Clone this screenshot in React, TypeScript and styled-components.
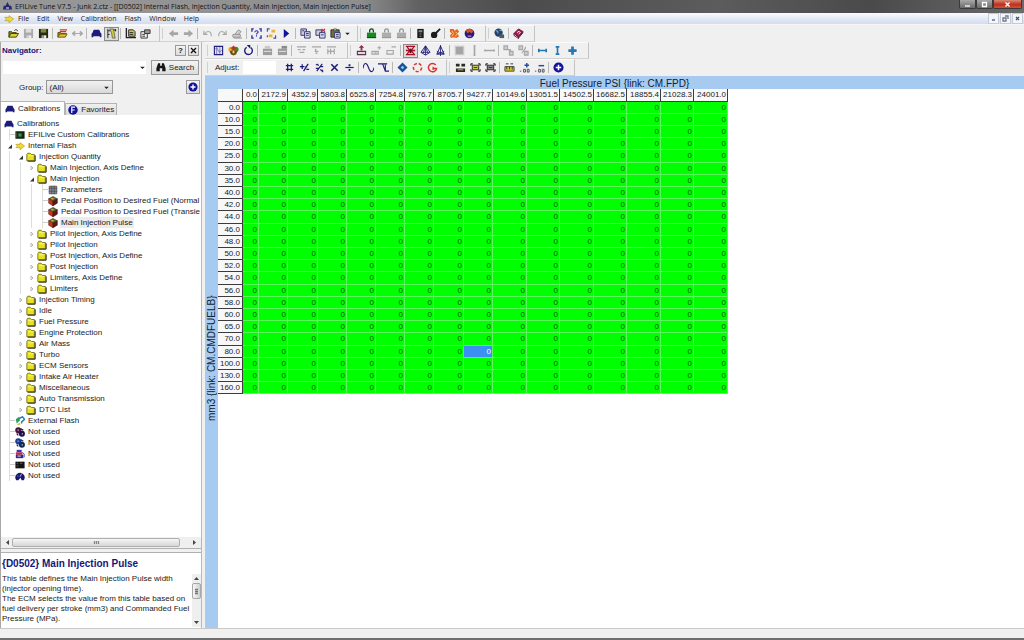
import React from "react";
import styled, { createGlobalStyle, css } from "styled-components";

const GlobalStyle = createGlobalStyle`
  *, *::before, *::after { box-sizing: border-box; }
  html, body { margin: 0; }
  body {
    font-family: "Liberation Sans", Arial, sans-serif;
    font-size: 8px;
    line-height: 11px;
    color: #222;
    background: #f0f0f0;
  }
  button, input, select { font: inherit; color: inherit; margin: 0; padding: 0; border: 0; background: none; border-radius: 0; }
  ul { margin: 0; padding: 0; list-style: none; }
  svg { display: block; flex: none; }
`;

/* ---------- icons ---------- */

const NAVY = "#1c1c7c";
const GREY = "#a6a6a6";

const floppy = (c: string, label: string) => (
  <>
    <path d="M1 1h10v10H1z" fill={c} />
    <path d="M3 1h6v4H3z" fill={label} />
    <path d="M4 8h5v3H4z" fill="#eee" />
    <path d="M5 8h1v3H5z" fill={c} />
  </>
);
const padlock = (c: string, d: string) => (
  <>
    <path d="M4 5V3a2 2 0 0 1 4 0v2" fill="none" stroke={d} strokeWidth="1.4" />
    <path d="M1 5h10v6H1z" fill={c} />
    <path d="M1 10h10v1H1z" fill={d} />
  </>
);
const car = (
  <path d="M3 2h6l1.4 3.2 1 1V10H9.500V9H2.500v1H.6V6.200l1-1z" fill={NAVY} />
);
const gearPair = (a: string, b: string) => (
  <>
    <circle cx="4" cy="4" r="3.700" fill={a} />
    <circle cx="8.300" cy="8" r="3.600" fill={b} />
    <path d="M3 3h1.500v1.500H3zM8 7.500h1.500V9H8z" fill="#b8b8d8" />
    <path d="M7 2l3 2M2 8l2 2" stroke={b} strokeWidth="1.500" />
  </>
);
const cone = (
  <>
    <path d="M6 1L1 8l5 3 5-3z" fill="none" stroke={NAVY} strokeWidth="1" />
    <path d="M6 1v10M6 1L3.500 9M6 1l2.500 8M2 8h8" stroke={NAVY} strokeWidth=".9" fill="none" />
  </>
);
const chip = (fill: string) => (
  <>
    <path d="M1 2h2M9 2h2M1 10h2M9 10h2M1 2v2M11 2v2M1 8v2M11 8v2" stroke="#222" strokeWidth="1.200" fill="none" />
    <path d="M2.500 3.500h7v5h-7z" fill={fill} stroke="#222" />
    <path d="M4 6h4" stroke="#333" />
  </>
);

const ICONS: Record<string, React.ReactNode> = {
  open: (
    <>
      <path d="M1 10V4h3l1 1h4v1" fill="#8a8420" stroke="#3e3c10" />
      <path d="M1 10l2-4h8.500L9 10z" fill="#d7d02e" stroke="#3e3c10" />
      <path d="M7 3c1-2 3-1.500 3.500.500" fill="none" stroke="#333" />
    </>
  ),
  saveGrey: floppy("#aaa", "#ddd"),
  save: floppy("#242a14", "#7e8c30"),
  openRed: (
    <>
      <path d="M1 10V5h3l1 1h5v1" fill="#a09018" stroke="#55480c" />
      <path d="M1 10l2-3.500h8L9 10z" fill="#e0c22c" stroke="#6a5410" />
      <path d="M3 2h8M3 4h7" stroke="#d03a1c" strokeWidth="1.500" />
    </>
  ),
  link: <path d="M0 6l3-2.500v5zM12 6L9 3.500v5zM3 6h6" fill={GREY} stroke={GREY} strokeWidth="1" />,
  car,
  tree: (
    <>
      <path d="M2 1v10M2 3h3M2 7h2" stroke="#222" />
      <path d="M4 1h4l2 10H7L6 5z" fill="#d8cf30" stroke="#444" strokeWidth=".7" />
      <path d="M8 2l3-1v3z" fill="#222" />
    </>
  ),
  chart: (
    <>
      <path d="M1.500 0v10.500H12" fill="none" stroke="#222" strokeWidth="1.500" />
      <path d="M4 2h5l2 2v5H4z" fill="#c9c45a" stroke="#222" />
      <path d="M5 5h4M5 7h4" stroke="#222" />
    </>
  ),
  props: (
    <>
      <path d="M1 4h7v7H1z" fill="#eee" stroke="#333" />
      <path d="M5 2h6v4H5z" fill="#999" stroke="#333" />
      <path d="M2.500 7h3M2.500 9h3" stroke="#333" />
    </>
  ),
  left: <path d="M1 6l5-4v2.500h5v3H6V10z" fill={GREY} />,
  right: <path d="M11 6L6 2v2.500H1v3h5V10z" fill={GREY} />,
  undo: <path d="M2 3v4h4M2.500 6.500C5 3 9 3 10 6.500V9" fill="none" stroke={GREY} strokeWidth="1.200" />,
  redo: <path d="M10 3v4H6M9.500 6.500C7 3 3 3 2 6.500V9" fill="none" stroke={GREY} strokeWidth="1.200" />,
  stamp: (
    <>
      <path d="M1 7h8v3H1zM3 7l4-5 3 2-3 3" fill="#d0d0d0" stroke="#909090" />
      <path d="M2 11h9" stroke="#909090" />
    </>
  ),
  query: (
    <>
      <path d="M3 1H1v3M9 1h2v3M3 11H1V8M9 11h2V8" fill="none" stroke="#2a2fb4" strokeWidth="1.500" />
      <path d="M4.200 4.500C4.200 2.500 8 2.600 7.700 4.600 7.500 5.700 6 5.600 6 7M6 8v1.300" fill="none" stroke="#2a2fb4" strokeWidth="1.200" />
    </>
  ),
  flashBox: (
    <>
      <path d="M4 1H1.500v3M8 11h2.500V8M1.500 8v2" fill="none" stroke="#4747a8" strokeWidth="1.200" />
      <path d="M6 2h4v3H6zM3 7h4v3H3z" fill="#e8b23c" />
    </>
  ),
  play: <path d="M3 1l6 5-6 5z" fill="#15159a" />,
  copy: (
    <>
      <path d="M1 1h6v7H1z" fill="#c9c9e0" stroke="#34346c" />
      <path d="M5 4h6v7H5z" fill="#d9d9f0" stroke="#34346c" />
      <path d="M6.500 6h3M6.500 8h3M2.500 3h2" stroke="#34346c" />
    </>
  ),
  copyX: (
    <>
      <path d="M1 2h6v6H1z" fill="#c9c9e0" stroke="#34346c" />
      <path d="M5 5h6v6H5z" fill="#d9d9f0" stroke="#34346c" />
      <path d="M7 1l4 3M11 1L7 4" stroke="#c8283c" strokeWidth="1.300" />
      <path d="M6.500 7.500h3" stroke="#34346c" />
    </>
  ),
  paste: (
    <>
      <path d="M1 2h9v8H1z" fill="#6c7038" stroke="#2c2f18" />
      <path d="M4 1h3v2H4z" fill="#ccc" stroke="#333" strokeWidth=".7" />
      <path d="M5 5h6v6H5z" fill="#dcdcf2" stroke="#34346c" />
      <path d="M6.500 7h3M6.500 9h3" stroke="#34346c" />
    </>
  ),
  drop: <path d="M2 4.500h8L6 8.500z" fill="#222" />,
  lockGreen: padlock("#168a26", "#124016"),
  lockGrey: padlock("#adadad", "#939393"),
  usb: (
    <>
      <path d="M2.500 1h7v10h-7z" fill="#1b1b1b" />
      <path d="M4 2.500h4v2H4zM5 6h2v1H5zM5 8.500h2v1H5z" fill="#8a8a8a" />
    </>
  ),
  key: (
    <>
      <circle cx="4.500" cy="7.500" r="3.500" fill="#1c1c1c" />
      <path d="M6 6l5-5" stroke="#1c1c1c" strokeWidth="2" />
    </>
  ),
  fire: (
    <>
      <path d="M1 1h4l1 2 3-2 2 3-2 2 2 3-3 2-3-1-3 1-1-3 2-2-2-2z" fill="#e8641c" />
      <path d="M3 3l2 3-2 3M7 4l2 2-2 3" stroke="#fbd07a" fill="none" />
    </>
  ),
  fireNavy: (
    <>
      <circle cx="6" cy="6" r="5.300" fill="#2b1a78" />
      <path d="M2 3c2-3 7-3 8 1L8 6 6 4 4 6z" fill="#d8541e" />
      <path d="M4 8h4v2H4z" fill="#8e70c0" />
    </>
  ),
  globe: (
    <>
      <circle cx="5" cy="5" r="4.500" fill="#22406c" />
      <path d="M2 3c2 0 3 1 2 3M6 2c1 1 2 1 3 1" stroke="#7fb2c8" fill="none" strokeWidth="1.200" />
      <path d="M6 7h5v4H6z" fill="#4c5a66" />
    </>
  ),
  book: (
    <>
      <path d="M1 6l5-5 5 3-5 6z" fill="#a31c50" stroke="#5c0f30" />
      <path d="M1 6v2l5 3.500V10M6 11l5-6" fill="none" stroke="#5c0f30" />
      <path d="M4.500 5l2-1.500L8 5 6 6.500" stroke="#fff" fill="none" />
    </>
  ),
  graph: (
    <>
      <path d="M1.500 1.500h9v9h-9z" fill="#e5e5f6" stroke={NAVY} strokeWidth="1.200" />
      <path d="M2 5l2-2 3 5 3-3M4 2v8M7.500 2v8" fill="none" stroke="#5a5aa8" strokeWidth=".8" />
    </>
  ),
  cube: (
    <>
      <circle cx="3.500" cy="5" r="3" fill="#e0a828" />
      <circle cx="8.500" cy="5" r="3" fill="#3c8c28" />
      <path d="M3 3.500L6 .500l3 3L6 6z" fill="#c5301c" />
      <path d="M2 7l4-2 4 2-1 3-3 1.500L3 10z" fill="#6a4a1c" />
      <path d="M5 6h2v3H5z" fill="#f0d850" />
    </>
  ),
  cubeDark: (
    <>
      <path d="M6 .500l5.200 2.800L6 6.200.800 3.300z" fill="#5b7030" stroke="#3a1a0c" strokeWidth=".6" />
      <path d="M.800 3.300L6 6.200v5.500L.800 8.600z" fill="#d0341c" stroke="#4a120c" strokeWidth=".6" />
      <path d="M11.200 3.300L6 6.200v5.500l5.200-3.100z" fill="#5c1a14" stroke="#2c0c0c" strokeWidth=".6" />
      <path d="M4 3.300h2.500" stroke="#e6c840" strokeWidth="1.400" />
    </>
  ),
  refresh: (
    <>
      <path d="M4 2.500a4.200 4.200 0 1 0 4.500.300" fill="none" stroke={NAVY} strokeWidth="1.500" />
      <path d="M4 0h4v4z" fill={NAVY} />
    </>
  ),
  printA: (
    <>
      <path d="M1 4h10v7H1z" fill="#9d9d9d" />
      <path d="M3 1h6v3H3z" fill="#c9c9c9" />
      <path d="M2 7h8" stroke="#e6e6e6" />
    </>
  ),
  printB: (
    <>
      <path d="M1 4h10v7H1z" fill="#9d9d9d" />
      <path d="M5 1h6v3H5z" fill="#8b8b8b" />
      <path d="M2 7h8" stroke="#e6e6e6" />
    </>
  ),
  alignA: <path d="M1 2h10M2 5h3M7 5h3M4 8h5" stroke={GREY} strokeWidth="1.400" />,
  alignB: <path d="M1 2h10M5 4v3M4 7h4M5 9h2" stroke={GREY} strokeWidth="1.400" />,
  alignC: <path d="M1 2h10M2 4v6M5 4v6M9 4v6M2 7h7" stroke={GREY} strokeWidth="1.300" />,
  stackA: (
    <>
      <path d="M1.500 7h9v3.500h-9z" fill="#e4d8e0" stroke="#5c3450" strokeWidth="1.200" />
      <path d="M6 0L3 3h2v3h2V3h2z" fill="#8c2c50" />
    </>
  ),
  stackB: <path d="M1 7h7v3H1zM9 1v4M7 3h4M4 8.500h2" fill="#e4e4e4" stroke={GREY} strokeWidth="1.200" />,
  stackC: <path d="M1 6h7v4H1zM6 2h5" fill="#ececec" stroke={GREY} strokeWidth="1.200" />,
  surface: (
    <>
      <path d="M2 1c1 3 3 4 3 5S3 9 1.500 11M10 1C9 4 7 5 7 6s2 3 3.500 5M1 1.500h10M1 6h10M1 10.500h10" stroke="#a80f28" strokeWidth="1.400" fill="none" />
      <path d="M5 4h2v5H5z" fill="#5c0a18" />
    </>
  ),
  cone,
  coneB: (
    <>
      <path d="M6 1L2 10h8z" fill="none" stroke={NAVY} />
      <path d="M6 0v12M2 10L10 7M10 10L2 7" stroke={NAVY} strokeWidth=".9" />
    </>
  ),
  block: <path d="M1.500 1.500h9v9h-9z" fill="#a4a4a4" stroke="#c8c8c8" strokeWidth="1.500" />,
  vbar: <path d="M6 1v10M5 1h2M5 11h2" stroke={GREY} strokeWidth="1.800" />,
  hbar: <path d="M1 6h10M1 5v2M11 5v2" stroke={GREY} strokeWidth="1.800" />,
  cellsA: <path d="M1 1h4v4H1zM5 5h3v3M7 7h4v4H7z" fill="#ccc" stroke={GREY} strokeWidth="1.200" />,
  cellsB: <path d="M1 1h4v4H1zM8 2v2L4 9M7 7h4v4H7z" fill="#ccc" stroke={GREY} strokeWidth="1.200" />,
  minus: <path d="M1 6h10M2 4v4M10 4v4" stroke="#2478b4" strokeWidth="1.800" />,
  vert: <path d="M6 1v10M4 2h4M4 10h4" stroke="#2478b4" strokeWidth="1.800" />,
  plus: <path d="M6 1.500v9M1.500 6h9" stroke="#2478b4" strokeWidth="3" />,
  hash: <path d="M4 2v8M8 2v8M2 4h8M2 8h8" stroke={NAVY} strokeWidth="1.400" />,
  plusPct: <path d="M1 5h5M3.500 2.500v5M10 2L5 10M8 8h3M7 5h2" stroke={NAVY} strokeWidth="1.400" />,
  pct: <path d="M2 3h3M9 2L3 10M7 9h3M3 2l2 2M7 8l3 3M7 5h3M2 7h3" stroke={NAVY} strokeWidth="1.300" />,
  times: <path d="M2.500 2.500l7 7M9.500 2.500l-7 7" stroke={NAVY} strokeWidth="1.700" />,
  divide: (
    <>
      <path d="M1.500 6h9" stroke={NAVY} strokeWidth="1.300" />
      <path d="M5 2.500h2v2H5zM5 7.500h2v2H5z" fill={NAVY} />
    </>
  ),
  wave: <path d="M0 7C1 0 4 0 6 6s5 6 6 0" fill="none" stroke={NAVY} strokeWidth="1.200" />,
  square: <path d="M0 2h5l3 8h4M5 2h5M8 10V3" fill="none" stroke={NAVY} strokeWidth="1.200" />,
  diamond: (
    <>
      <path d="M6 .500L11.500 6 6 11.500.500 6z" fill="#1d4f98" />
      <path d="M6 4l2 2-2 2-2-2z" fill="#7fd0e8" />
    </>
  ),
  redDash: <circle cx="6" cy="6" r="4.500" fill="none" stroke="#d8352c" strokeWidth="1.600" strokeDasharray="3.500 2" />,
  redTurn: (
    <>
      <path d="M9.500 3.200A4.500 4.500 0 1 0 10.500 7H6.500" fill="none" stroke="#d8352c" strokeWidth="1.600" />
      <path d="M6 5v4l3-2z" fill="#d8352c" />
    </>
  ),
  chipA: (
    <>
      <path d="M1 2h4v3H1zM7 2h4v3H7zM1 7h10v4H1z" fill="#2b2b20" />
      <path d="M3 8.500h6" stroke="#c6c45c" />
    </>
  ),
  chipB: chip("#c9c845"),
  chipC: chip("#8c8c8c"),
  ruler: (
    <>
      <path d="M1 5h10v5H1z" fill="#c8c238" stroke="#4a4818" />
      <path d="M3 5v3M6 5v3M9 5v3M2 2h3M7 2h3" stroke="#30305a" />
    </>
  ),
  digUp: (
    <>
      <path d="M6 3.500h5M8.500 1v5" stroke="#2a4a9c" strokeWidth="1.600" />
      <path d="M1 10h1.500M5 8h2v3H5zM9 8h2v3H9z" fill="none" stroke="#4a4a5c" />
    </>
  ),
  digDown: (
    <>
      <path d="M5 4h6" stroke="#2a4a9c" strokeWidth="1.600" />
      <path d="M1 10h1.500M5 8h2v3H5zM9 8h2v3H9z" fill="none" stroke="#4a4a5c" />
    </>
  ),
  addRound: (
    <>
      <circle cx="6" cy="6" r="5.500" fill="#12129a" />
      <path d="M6 3v6M3 6h6" stroke="#fff" strokeWidth="1.700" />
    </>
  ),
  search: (
    <path d="M2.500 1.500H5v3h2v-3h2.500l2 6V11H7.500V7.500h-3V11H.5V7.500z" fill="#161616" />
  ),
  fav: (
    <>
      <circle cx="6" cy="6" r="5.700" fill="#14149a" />
      <path d="M4.500 9.500v-7H8.500M4.500 6H8" fill="none" stroke="#fff" strokeWidth="1.400" />
    </>
  ),
  flashArrow: <path d="M1 4h5V2l5.500 4L6 10.500V8H1L3 6z" fill="#f0dc30" stroke="#b89a1c" strokeWidth=".8" />,
  folder: (
    <>
      <path d="M1 10.500V3l1-1.500h3L6.500 3H10v7.500z" fill="#e8e11c" stroke="#6e6a14" />
      <path d="M11 4v7H2" fill="none" stroke="#2a2810" strokeWidth="1.200" />
      <path d="M2.500 4.500H9" stroke="#fbf99a" />
    </>
  ),
  board: (
    <>
      <path d="M.500 1.500h11v9H.500z" fill="#122412" />
      <path d="M4 4h4v4H4z" fill="#3f8c4c" />
      <path d="M2 3v6" stroke="#4a604a" />
    </>
  ),
  grid: (
    <>
      <path d="M1.500 1.500h9v9h-9z" fill="#8a8a92" stroke="#4c4c54" />
      <path d="M4.500 1v10M7.500 1v10M1 4h10M1 7.500h10" stroke="#4c4c54" strokeWidth=".9" />
    </>
  ),
  extFlash: (
    <>
      <path d="M1 4l4-3 1 4-4 4z" fill="#2a9c5c" />
      <path d="M5 3l4-2 2.500 3L8 7v2" fill="none" stroke="#2c7cc0" strokeWidth="1.800" />
      <path d="M2 10l4-2 1 2-3 1z" fill="#c8d040" />
    </>
  ),
  gearsA: gearPair("#4c1240", "#1c1048"),
  gearsB: gearPair("#1a3a9c", "#122c54"),
  fuel: (
    <>
      <path d="M2 1h6v3H2z" fill="#3838b8" />
      <path d="M1 4h8v3H1z" fill="#c42848" />
      <path d="M1 7h9v4H1z" fill="#2c2c8c" />
      <path d="M9 4l2 2v4" stroke="#2c2c8c" fill="none" />
      <path d="M3 8.500h4" stroke="#fff" />
    </>
  ),
  black: (
    <>
      <path d="M.500 2h11v8H.500z" fill="#121212" />
      <path d="M2 4h2M6 4h3M2 7h2" stroke="#6a6a6a" />
    </>
  ),
  gauge: (
    <>
      <path d="M1.500 11A5.500 5.500 0 1 1 10.500 11H8L6.500 8 4 11z" fill="#181870" />
      <path d="M6 7l2-4M3 6h1" stroke="#c8c8f0" />
    </>
  ),
  app: (
    <>
      <path d="M6 0l2.500 5H11l1 5H0l1-5h2.500z" fill="#26266a" />
      <path d="M4 7h4v2H4z" fill="#a8b8d8" />
    </>
  ),
};

const Icon = ({ name, size = 12 }: { name: string; size?: number }) => (
  <svg width={size} height={size} viewBox="0 0 12 12" aria-hidden="true">
    {ICONS[name]}
  </svg>
);

/* ---------- frame ---------- */

const Window = styled.div`
  display: flex;
  flex-direction: column;
  min-height: 100vh;
`;

const TitleBar = styled.header`
  display: flex;
  align-items: center;
  gap: 3px;
  height: 13px;
  padding-left: 3px;
  font-family: "Open Sans", "Noto Sans", sans-serif;
  color: #111;
  background: linear-gradient(90deg, #989898 0, #8e8e8e 360px, #606060 420px, #4c4c4c 520px, #5c5c5c 70%, #4a4a4a 85%, #6a6a6a 100%);
`;

const TitleText = styled.h1`
  flex: 1;
  margin: 0;
  font-size: 7px;
  line-height: 12px;
  font-weight: 400;
  white-space: nowrap;
`;

const WindowButtons = styled.div`
  display: flex;
  align-self: flex-start;
  margin-right: 2px;
`;

const WindowButton = styled.button<{ $close?: boolean }>`
  display: grid;
  place-items: center;
  width: ${(p) => (p.$close ? 29 : 17)}px;
  height: 9px;
  border: 1px solid #3a3a3a;
  border-top: 0;
  border-radius: 0 0 2px 2px;
  background: ${(p) => (p.$close ? "linear-gradient(#d58a78, #c0301a 55%, #d2503a)" : "linear-gradient(#a8a8a8, #6a6a6a)")};
`;

const MenuBar = styled.nav`
  display: flex;
  align-items: center;
  height: 12px;
  padding-left: 4px;
  font-family: "Open Sans", "Noto Sans", sans-serif;
  font-size: 7px;
  background: linear-gradient(#fbfcfe, #e3e9f6 50%, #d4dcee);
  border-bottom: 1px solid #f6f6f6;
`;

const MenuItems = styled.div`
  display: flex;
  flex: 1;
  gap: 8px;
  padding-left: 4px;
`;

const MenuButton = styled.button`
  line-height: 11px;
`;

const ChildButton = styled.button`
  display: grid;
  place-items: center;
  width: 11px;
  height: 11px;
  margin-right: 1px;
  border: 1px solid #c3cad8;
  background: #f3f6fb;
`;

/* ---------- toolbars ---------- */

const ToolRow = styled.div`
  display: flex;
  height: 17px;
`;

const Toolbar = styled.div<{ $end?: number; $grip?: boolean }>`
  display: flex;
  align-items: center;
  padding: 0 ${(p) => p.$end ?? 6}px 0 6px;
  border-right: 1px solid #c4c4c4;
  border-bottom: 1px solid #d2d2d2;
  border-top: 1px solid #fbfbfb;
  ${(p) =>
    p.$grip &&
    css`
      background: linear-gradient(#d0d0d0, #d0d0d0) 2px 50% / 1px 11px no-repeat;
    `}
`;

const ToolButton = styled.button<{ $pressed?: boolean; $narrow?: boolean }>`
  display: grid;
  place-items: center;
  width: ${(p) => (p.$narrow ? 8 : 15)}px;
  height: 14px;
  ${(p) =>
    p.$pressed &&
    css`
      border: 1px solid #8c8c8c;
      background: #dcdcdc;
    `}
`;

const Separator = styled.span`
  width: 1px;
  height: 11px;
  margin: 0 2px 0 1px;
  background: #b8b8b8;
`;

const AdjustLabel = styled.label`
  display: flex;
  align-items: center;
  gap: 4px;
  padding: 0 6px 0 4px;
`;

const AdjustInput = styled.input`
  width: 33px;
  height: 13px;
  background: #fff;
`;

const Tools = ({ items, pressed = [] }: { items: string; pressed?: string[] }) => (
  <>
    {items.split(" ").map((name, i) =>
      name === "|" ? (
        <Separator key={i} />
      ) : (
        <ToolButton key={i} aria-label={name} $pressed={pressed.includes(name)} $narrow={name === "drop"}>
          <Icon name={name} size={name === "drop" ? 7 : 11} />
        </ToolButton>
      )
    )}
  </>
);

/* ---------- navigator ---------- */

const Body = styled.div`
  display: grid;
  grid-template-columns: 202px minmax(0, 1fr);
  column-gap: 3px;
  flex: 1;
`;

const Navigator = styled.aside`
  display: flex;
  flex-direction: column;
  min-width: 0;
  border-left: 1px solid #a8a8a8;
  border-right: 1px solid #b8b8b8;
`;

const NavHeader = styled.div`
  display: flex;
  align-items: center;
  gap: 2px;
  height: 17px;
  padding: 0 2px 0 1px;
`;

const NavTitle = styled.h2`
  flex: 1;
  margin: 0;
  font-size: 8px;
  line-height: 11px;
  color: #15157a;
`;

const PushButton = styled.button<{ $w: number; $h: number }>`
  display: flex;
  align-items: center;
  justify-content: center;
  gap: 3px;
  width: ${(p) => p.$w}px;
  height: ${(p) => p.$h}px;
  border: 1px solid #9a9a9a;
  background: linear-gradient(#f4f4f4, #dcdcdc);
`;

const SearchRow = styled.div`
  display: flex;
  align-items: center;
  gap: 5px;
  height: 16px;
  padding: 0 2px;
`;

const Combo = styled.div`
  display: flex;
  flex: 1;
  align-items: center;
  height: 13px;
  background: #fff;
`;

const ComboInput = styled.input`
  flex: 1;
  min-width: 0;
  height: 13px;
`;

const GroupRow = styled.div`
  display: flex;
  align-items: center;
  justify-content: space-between;
  height: 24px;
  padding: 0 1px 0 18px;
`;

const GroupLabel = styled.label`
  display: flex;
  align-items: center;
  gap: 3px;
`;

const SelectBox = styled.span`
  display: grid;
  align-items: center;
  justify-items: end;
  width: 67px;
  height: 14px;
  padding-right: 2px;
  border: 1px solid #969696;
  background: linear-gradient(#f1f1f1, #d9d9d9);
  > * { grid-area: 1 / 1; }
`;

const Select = styled.select`
  appearance: none;
  width: 100%;
  height: 12px;
  padding-left: 2px;
`;

const Tabs = styled.div`
  display: flex;
  align-items: flex-end;
  height: 16px;
`;

const Tab = styled.button<{ $active?: boolean }>`
  display: flex;
  align-items: center;
  gap: 3px;
  height: ${(p) => (p.$active ? 14 : 12)}px;
  padding: 0 ${(p) => (p.$active ? 4 : 2)}px;
  border: 1px solid #b4b4b4;
  border-bottom: 0;
  border-left-width: ${(p) => (p.$active ? 0 : 1)}px;
  background: ${(p) => (p.$active ? "#fff" : "linear-gradient(#f0f0f0, #dcdcdc)")};
`;

const TreePane = styled.div`
  display: flex;
  flex: 1;
  flex-direction: column;
  background: #fff;
  border-bottom: 1px solid #b0b0b0;
`;

const TreeList = styled.ul`
  flex: 1;
  padding: 3px 0 0 3px;
`;

const TreeRow = styled.li`
  display: flex;
  align-items: center;
  height: 11px;
  white-space: nowrap;
`;

const Guide = styled.span<{ $line?: boolean; $branch?: boolean }>`
  display: grid;
  place-items: center;
  flex: none;
  width: 11px;
  height: 11px;
  background:
    ${(p) => (p.$line ? "linear-gradient(#ddd, #ddd) 5px 0 / 1px 11px no-repeat" : "none")},
    ${(p) => (p.$branch ? "linear-gradient(#ccc, #ccc) 5px 5px / 6px 1px no-repeat" : "none")};
`;

const TreeLabel = styled.span<{ $current?: boolean }>`
  margin-left: 2px;
  padding: 0 1px;
  background: ${(p) => (p.$current ? "#ececec" : "none")};
`;

const HScroll = styled.div`
  display: flex;
  align-items: center;
  height: 11px;
  padding: 0 2px;
  background: #efefef;
`;

const ScrollButton = styled.button`
  display: grid;
  place-items: center;
  width: 9px;
  height: 9px;
`;

const HThumb = styled.span`
  display: grid;
  place-items: center;
  width: 168px;
  height: 9px;
  margin-right: auto;
  border: 1px solid #b0b0b0;
  border-radius: 2px;
  background: linear-gradient(#f6f6f6, #d6d6d6);
`;

const InfoPane = styled.section`
  height: 76px;
  margin-top: 3px;
  padding-left: 1px;
  background: #fff;
  border-top: 1px solid #b0b0b0;
`;

const InfoTitle = styled.h2`
  margin: 0;
  padding-top: 5px;
  font-size: 10px;
  line-height: 12px;
  color: #15157a;
  white-space: nowrap;
`;

const InfoBody = styled.div`
  display: flex;
  justify-content: space-between;
  margin-top: 4px;
`;

const InfoText = styled.p`
  flex: 1;
  margin: 0;
  line-height: 10px;
  white-space: pre-line;
`;

const VScroll = styled.div`
  display: flex;
  flex-direction: column;
  align-items: center;
  width: 9px;
  height: 53px;
  background: #efefef;
`;

const VThumb = styled.span`
  display: grid;
  place-items: center;
  width: 9px;
  height: 16px;
  margin-bottom: auto;
  border: 1px solid #a8a8a8;
  border-radius: 2px;
  background: linear-gradient(90deg, #f6f6f6, #d0d0d0);
`;

/* ---------- table view ---------- */

const Main = styled.main`
  display: flex;
  flex-direction: column;
  min-width: 0;
`;

const TableView = styled.section`
  display: grid;
  grid-template: 13px 1fr / 13px minmax(0, 1fr);
  flex: 1;
  background: #a6caf0;
  font-size: 10px;
  color: #123;
`;

const ColumnTitle = styled.div`
  grid-column: 1 / -1;
  line-height: 15px;
  text-align: center;
`;

const RowTitle = styled.div`
  display: flex;
  align-items: center;
  justify-content: center;
  writing-mode: vertical-rl;
  transform: rotate(180deg);
  line-height: 13px;
  white-space: nowrap;
`;

const Sheet = styled.div`
  background: #fff;
  overflow: hidden;
`;

const DataTable = styled.table`
  border-collapse: separate;
  border-spacing: 0;
  font-size: 8px;
  line-height: 10px;
  text-align: right;
  color: #222;
`;

const headCell = css`
  padding: 0 1px 0 0;
  font-weight: 400;
  background: #f8f8f8;
  border: 0 solid #3c3c3c;
  border-width: 0 1px 1px 0;
`;

const HeadCell = styled.th`
  ${headCell}
  height: 13px;
`;

const RowHead = styled.th`
  ${headCell}
  padding-right: 2px;
`;

const DataRow = styled.tr`
  height: 12px;
  &:nth-child(5n) { height: 13px; }
`;

const DataCell = styled.td<{ $selected?: boolean }>`
  padding: 0 1px 0 0;
  border: 0 solid #5cf35c;
  border-width: 0 1px 1px 0;
  color: ${(p) => (p.$selected ? "#fff" : "#065c06")};
  background: ${(p) => (p.$selected ? "#3c90f4" : "#00ff00")};
`;

const StatusBar = styled.footer`
  height: 12px;
  border-top: 1px solid #c8c8c8;
  border-bottom: 2px solid #6e6e6e;
  background: #f0f0f0;
`;

/* ---------- data ---------- */

const MENUS = ["File", "Edit", "View", "Calibration", "Flash", "Window", "Help"];

type Node = [level: number, icon: string, label: string, state?: "open" | "closed"];

const TREE: Node[] = [
  [0, "car", "Calibrations"],
  [1, "board", "EFILive Custom Calibrations"],
  [1, "flashArrow", "Internal Flash", "open"],
  [2, "folder", "Injection Quantity", "open"],
  [3, "folder", "Main Injection, Axis Define", "closed"],
  [3, "folder", "Main Injection", "open"],
  [4, "grid", "Parameters"],
  [4, "cubeDark", "Pedal Position to Desired Fuel (Normal"],
  [4, "cubeDark", "Pedal Position to Desired Fuel (Transie"],
  [4, "cubeDark", "Main Injection Pulse"],
  [3, "folder", "Pilot Injection, Axis Define", "closed"],
  [3, "folder", "Pilot Injection", "closed"],
  [3, "folder", "Post Injection, Axis Define", "closed"],
  [3, "folder", "Post Injection", "closed"],
  [3, "folder", "Limiters, Axis Define", "closed"],
  [3, "folder", "Limiters", "closed"],
  [2, "folder", "Injection Timing", "closed"],
  [2, "folder", "Idle", "closed"],
  [2, "folder", "Fuel Pressure", "closed"],
  [2, "folder", "Engine Protection", "closed"],
  [2, "folder", "Air Mass", "closed"],
  [2, "folder", "Turbo", "closed"],
  [2, "folder", "ECM Sensors", "closed"],
  [2, "folder", "Intake Air Heater", "closed"],
  [2, "folder", "Miscellaneous", "closed"],
  [2, "folder", "Auto Transmission", "closed"],
  [2, "folder", "DTC List", "closed"],
  [1, "extFlash", "External Flash"],
  [1, "gearsA", "Not used"],
  [1, "gearsB", "Not used"],
  [1, "fuel", "Not used"],
  [1, "black", "Not used"],
  [1, "gauge", "Not used"],
];

const COLUMNS: [string, number][] = [
  ["0.0", 16], ["2172.9", 29], ["4352.9", 30], ["5803.8", 29], ["6525.8", 29], ["7254.8", 29],
  ["7976.7", 29], ["8705.7", 30], ["9427.7", 29], ["10149.6", 34], ["13051.5", 33], ["14502.5", 34],
  ["16682.5", 33], ["18855.4", 34], ["21028.3", 33], ["24001.0", 34],
];

const ROWS = [
  "0.0", "10.0", "15.0", "20.0", "25.0", "30.0", "35.0", "40.0", "42.0", "44.0", "46.0", "48.0",
  "50.0", "52.0", "54.0", "56.0", "58.0", "60.0", "65.0", "70.0", "80.0", "100.0", "130.0", "160.0",
];

const Expander = ({ state }: { state: "open" | "closed" }) => (
  <svg width="8" height="8" viewBox="0 0 8 8" aria-hidden="true">
    {state === "open" ? (
      <path d="M6 2.500V6.500H2z" fill="#333" />
    ) : (
      <path d="M3 2L5 4 3 6z" fill="#fff" stroke="#b8b8b8" />
    )}
  </svg>
);

const Arrow = ({ d }: { d: string }) => (
  <svg width="7" height="7" viewBox="0 0 7 7" aria-hidden="true">
    <path d={d} fill="#444" />
  </svg>
);

const Glyph = ({ d, color }: { d: string; color: string }) => (
  <svg width="7" height="7" viewBox="0 0 7 7" aria-hidden="true">
    <path d={d} fill="none" stroke={color} strokeWidth="1.300" />
  </svg>
);

export default function App() {
  return (
    <Window>
      <GlobalStyle />
      <TitleBar>
        <Icon name="app" size={9} />
        <TitleText>
          EFILive Tune V7.5 - Junk 2.ctz - [[D0502] Internal Flash, Injection Quantity, Main Injection, Main Injection Pulse]
        </TitleText>
        <WindowButtons>
          <WindowButton aria-label="Minimize"><Glyph d="M1 5h5" color="#fff" /></WindowButton>
          <WindowButton aria-label="Restore"><Glyph d="M1.500 1.500h4v4h-4z" color="#fff" /></WindowButton>
          <WindowButton aria-label="Close" $close><Glyph d="M1.500 1.500l4 4M5.500 1.500l-4 4" color="#fff" /></WindowButton>
        </WindowButtons>
      </TitleBar>
      <MenuBar>
        <Icon name="flashArrow" size={10} />
        <MenuItems>
          {MENUS.map((m) => <MenuButton key={m}>{m}</MenuButton>)}
        </MenuItems>
        <ChildButton aria-label="Minimize document"><Glyph d="M2 5h3" color="#556" /></ChildButton>
        <ChildButton aria-label="Restore document"><Glyph d="M1 3h3v3H1zM3 1h3v3" color="#778" /></ChildButton>
        <ChildButton aria-label="Close document"><Glyph d="M2 2l3 3M5 2L2 5" color="#556" /></ChildButton>
      </MenuBar>
      <ToolRow>
        <Toolbar>
          <Tools items="open saveGrey save | openRed link | car tree | chart props" pressed={["tree"]} />
        </Toolbar>
        <Toolbar $grip>
          <Tools items="left right | undo redo stamp | query flashBox play | copy copyX paste drop" />
        </Toolbar>
        <Toolbar $grip $end={8}>
          <Tools items="lockGreen lockGrey lockGrey | usb key | fire fireNavy" />
        </Toolbar>
        <Toolbar $grip $end={8}>
          <Tools items="globe | book" />
        </Toolbar>
      </ToolRow>
      <Body>
        <Navigator>
          <NavHeader>
            <NavTitle>Navigator:</NavTitle>
            <PushButton $w={11} $h={11}><b>?</b></PushButton>
            <PushButton $w={11} $h={11} aria-label="Close navigator"><Glyph d="M1 1l5 5M6 1L1 6" color="#111" /></PushButton>
          </NavHeader>
          <SearchRow>
            <Combo>
              <ComboInput aria-label="Search text" />
              <ToolButton $narrow aria-label="Recent searches"><Icon name="drop" size={7} /></ToolButton>
            </Combo>
            <PushButton $w={48} $h={15}><Icon name="search" size={10} />Search</PushButton>
          </SearchRow>
          <GroupRow>
            <GroupLabel>
              Group:
              <SelectBox>
                <Select defaultValue="all"><option value="all">(All)</option></Select>
                <Icon name="drop" size={7} />
              </SelectBox>
            </GroupLabel>
            <PushButton $w={14} $h={14} aria-label="Add"><Icon name="addRound" size={10} /></PushButton>
          </GroupRow>
          <Tabs>
            <Tab $active><Icon name="car" size={10} />Calibrations</Tab>
            <Tab><Icon name="fav" size={10} />Favorites</Tab>
          </Tabs>
          <TreePane>
            <TreeList>
              {TREE.map(([level, icon, label, state], i) => (
                <TreeRow key={i}>
                  {Array.from({ length: level }, (_, g) => (
                    <Guide key={g} $line={g < level - 1 || !state} $branch={g === level - 1 && !state}>
                      {g === level - 1 && state ? <Expander state={state} /> : null}
                    </Guide>
                  ))}
                  <Icon name={icon} size={10} />
                  <TreeLabel $current={label === "Main Injection Pulse"}>{label}</TreeLabel>
                </TreeRow>
              ))}
            </TreeList>
            <HScroll>
              <ScrollButton aria-label="Scroll left"><Arrow d="M5 1v5L2 3.500z" /></ScrollButton>
              <HThumb><Glyph d="M1.500 2v3M3.500 2v3M5.500 2v3" color="#888" /></HThumb>
              <ScrollButton aria-label="Scroll right"><Arrow d="M2 1v5l3-2.500z" /></ScrollButton>
            </HScroll>
          </TreePane>
          <InfoPane>
            <InfoTitle>{"{D0502} Main Injection Pulse"}</InfoTitle>
            <InfoBody>
              <InfoText>
                {"This table defines the Main Injection Pulse width\n(injector opening time).\nThe ECM selects the value from this table based on\nfuel delivery per stroke (mm3) and Commanded Fuel\nPressure (MPa)."}
              </InfoText>
              <VScroll>
                <ScrollButton aria-label="Scroll up"><Arrow d="M1 5h5L3.500 2z" /></ScrollButton>
                <VThumb><Glyph d="M2 1.500h3M2 3.500h3M2 5.500h3" color="#777" /></VThumb>
                <ScrollButton aria-label="Scroll down"><Arrow d="M1 2h5L3.500 5z" /></ScrollButton>
              </VScroll>
            </InfoBody>
          </InfoPane>
        </Navigator>
        <Main>
          <ToolRow>
            <Toolbar $grip $end={8}>
              <Tools items="graph cube refresh | printA printB | alignA alignB alignC" />
            </Toolbar>
            <Toolbar $grip $end={8}>
              <Tools
                items="stackA stackB stackC | surface cone coneB | block vbar hbar | cellsA cellsB | minus vert plus"
                pressed={["surface"]}
              />
            </Toolbar>
          </ToolRow>
          <ToolRow>
            <Toolbar $grip>
              <AdjustLabel>
                Adjust:
                <AdjustInput />
              </AdjustLabel>
              <Tools items="hash plusPct pct times divide | wave square | diamond redDash redTurn" />
            </Toolbar>
            <Toolbar $grip $end={8}>
              <Tools items="chipA chipB chipC | ruler digUp digDown | addRound" />
            </Toolbar>
          </ToolRow>
          <TableView>
            <ColumnTitle>{"Fuel Pressure PSI {link: CM.FPD}"}</ColumnTitle>
            <RowTitle>{"mm3 {link: CM.CMDFUELB}"}</RowTitle>
            <Sheet>
              <DataTable>
                <colgroup>
                  <col width={25} />
                  {COLUMNS.map(([name, width]) => <col key={name} width={width} />)}
                </colgroup>
                <thead>
                  <tr>
                    <HeadCell />
                    {COLUMNS.map(([name]) => <HeadCell key={name} scope="col">{name}</HeadCell>)}
                  </tr>
                </thead>
                <tbody>
                  {ROWS.map((row) => (
                    <DataRow key={row}>
                      <RowHead scope="row">{row}</RowHead>
                      {COLUMNS.map(([col]) => (
                        <DataCell key={col} $selected={row === "80.0" && col === "9427.7"}>0</DataCell>
                      ))}
                    </DataRow>
                  ))}
                </tbody>
              </DataTable>
            </Sheet>
          </TableView>
        </Main>
      </Body>
      <StatusBar />
    </Window>
  );
}
